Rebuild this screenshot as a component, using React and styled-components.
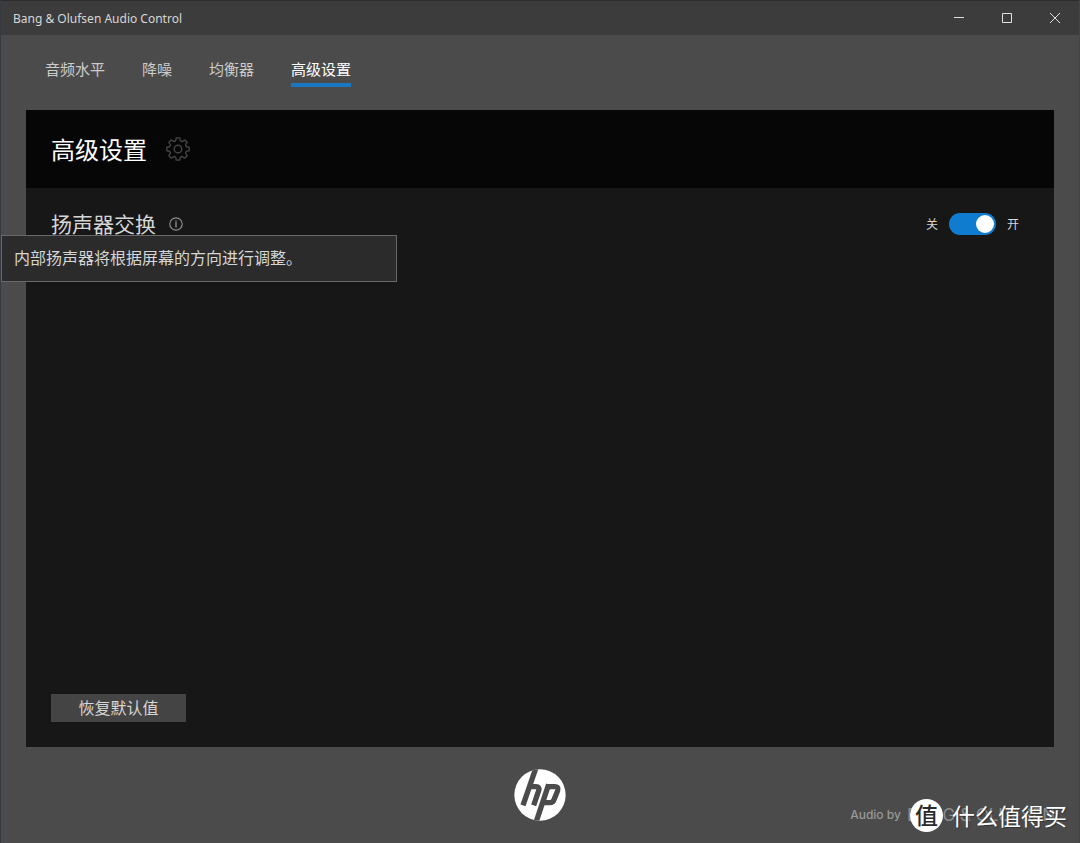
import React, { useState } from "react";
import styled, { createGlobalStyle } from "styled-components";

const GlobalStyle = createGlobalStyle`
    * {
        box-sizing: border-box;
    }

    body {
        margin: 0;
        background: #4b4b4b;
        font-family: "Noto Sans", "Noto Sans CJK SC", sans-serif;
        color: #d6d6d6;
    }

    button {
        font-family: inherit;
        color: inherit;
        border: none;
        padding: 0;
        cursor: pointer;
    }
`;

const TABS = ["音频水平", "降噪", "均衡器", "高级设置"];

// eight broad teeth joined by round valleys
const gearPath = () => {
    const point = (radius, degrees) => {
        const a = (degrees * Math.PI) / 180;
        return `${(12 + radius * Math.cos(a)).toFixed(2)} ${(12 + radius * Math.sin(a)).toFixed(2)}`;
    };
    let d = "";
    for (let k = 0; k < 8; k++) {
        const a = k * 45;
        d += `${k ? "L" : "M"}${point(9.8, a - 12)}L${point(11.3, a - 9)}L${point(11.3, a + 9)}L${point(9.8, a + 12)}`;
        d += `A1.9 1.9 0 0 0 ${point(9.8, a + 33)}`;
    }
    return d + "Z";
};

const GearIcon = () => (
    <svg width="24" height="24" viewBox="0 0 24 24" fill="none" stroke="#444444" strokeWidth="1.4" strokeLinejoin="round" aria-hidden="true">
        <path d={gearPath()} />
        <circle cx="12" cy="12" r="3.8" />
    </svg>
);

const InfoIcon = () => (
    <svg width="14" height="14" viewBox="0 0 14 14" fill="none" stroke="#8c8c8c" strokeWidth="1.2" aria-hidden="true">
        <circle cx="7" cy="7" r="6.2" />
        <path d="M7 3.4v1.3M7 5.2v5.2" strokeWidth="1.4" />
    </svg>
);

const HpLogo = () => (
    <svg width="52" height="52" viewBox="0 0 156 156" role="img" aria-label="hp">
        <defs>
            <clipPath id="disc">
                <circle cx="78" cy="78" r="77" />
            </clipPath>
        </defs>
        <circle cx="78" cy="78" r="77" fill="#ffffff" />
        <g clipPath="url(#disc)" fill="none" stroke="#4b4b4b" strokeWidth="16">
            <path d="M66 -4L27 109" />
            <path d="M44 53H66Q78 53 74 65L59 109" />
            <path d="M104 46L66 160" />
            <path d="M100 53H122Q135 53 131 65L120 92Q117 101 108 101H86" />
        </g>
    </svg>
);

const App = () => {
    const [active, setActive] = useState("高级设置");
    const [swapped, setSwapped] = useState(true);

    return (
        <Window>
            <GlobalStyle />
            <TitleBar>
                <Title>Bang &amp; Olufsen Audio Control</Title>
                <WindowButton aria-label="最小化">
                    <svg width="12" height="12" viewBox="0 0 12 12"><path d="M1 5.5h10" /></svg>
                </WindowButton>
                <WindowButton aria-label="最大化">
                    <svg width="12" height="12" viewBox="0 0 12 12"><path d="M1.5 1.5h9v9h-9z" /></svg>
                </WindowButton>
                <WindowButton aria-label="关闭">
                    <svg width="12" height="12" viewBox="0 0 12 12"><path d="M1 1l10 10M11 1L1 11" /></svg>
                </WindowButton>
            </TitleBar>
            <Nav>
                {TABS.map((tab) => (
                    <Tab key={tab} $active={tab === active} onClick={() => setActive(tab)}>
                        {tab}
                    </Tab>
                ))}
            </Nav>
            <Panel>
                <PanelHeader>
                    <h1>高级设置</h1>
                    <GearIcon />
                </PanelHeader>
                <SettingRow>
                    <SettingName>
                        <label htmlFor="speaker-swap">扬声器交换</label>
                        <InfoButton aria-label="说明" aria-describedby="swap-tip">
                            <InfoIcon />
                        </InfoButton>
                    </SettingName>
                    <SwitchGroup>
                        <span>关</span>
                        <Switch
                            id="speaker-swap"
                            type="checkbox"
                            role="switch"
                            checked={swapped}
                            onChange={(e) => setSwapped(e.target.checked)}
                        />
                        <span>开</span>
                    </SwitchGroup>
                    <Tooltip id="swap-tip" role="tooltip">内部扬声器将根据屏幕的方向进行调整。</Tooltip>
                </SettingRow>
                <PanelFooter>
                    <ResetButton>恢复默认值</ResetButton>
                </PanelFooter>
            </Panel>
            <Footer>
                <HpLogo />
                <Brand>
                    <small>Audio by</small>
                    <span>BANG &amp; OLUFSEN</span>
                </Brand>
                <Watermark>
                    <Seal>值</Seal>
                    <span>什么值得买</span>
                </Watermark>
            </Footer>
        </Window>
    );
};

export default App;

const Window = styled.div`
    min-height: 100vh;
    display: flex;
    flex-direction: column;
    border-left: 1px solid #343a40;
    border-right: 1px solid #444444;
`;

const TitleBar = styled.header`
    height: 35px;
    display: flex;
    align-items: center;
    background: #3c3c3c;
    border-top: 1px solid #2c2c2c;
`;

const Title = styled.span`
    flex: 1;
    padding-left: 12px;
    font-size: 12px;
`;

const WindowButton = styled.button`
    width: 48px;
    height: 34px;
    display: flex;
    align-items: center;
    justify-content: center;
    background: transparent;

    svg {
        fill: none;
        stroke: #e0e0e0;
    }

    &:hover {
        background: #555555;
    }
`;

const Nav = styled.nav`
    height: 75px;
    display: flex;
    align-items: flex-start;
    gap: 37px;
    padding: 22px 44px 0;
`;

const Tab = styled.button`
    height: 30px;
    display: flex;
    align-items: flex-start;
    background: transparent;
    font-size: 15px;
    line-height: 24px;
    color: ${({ $active }) => ($active ? "#ffffff" : "#cccccc")};
    border-bottom: 4px solid ${({ $active }) => ($active ? "#1a78c2" : "transparent")};
`;

const Panel = styled.main`
    flex: 1;
    display: flex;
    flex-direction: column;
    margin: 0 25px;
    background: #171717;
`;

const PanelHeader = styled.div`
    height: 78px;
    display: flex;
    align-items: center;
    gap: 19px;
    padding: 0 25px;
    background: #060606;

    h1 {
        margin: 0;
        padding-top: 2px;
        font-size: 24px;
        font-weight: 400;
        line-height: 36px;
        color: #ffffff;
    }
`;

const SettingRow = styled.div`
    position: relative;
    height: 72px;
    display: flex;
    align-items: center;
    justify-content: space-between;
    padding: 0 35px 0 25px;
`;

const SettingName = styled.div`
    display: flex;
    align-items: center;
    gap: 13px;
    font-size: 21px;
    line-height: 32px;
`;

const InfoButton = styled.button`
    display: flex;
    background: transparent;
`;

const SwitchGroup = styled.div`
    display: flex;
    align-items: center;
    gap: 11px;
    font-size: 12px;
`;

const Switch = styled.input`
    appearance: none;
    width: 47px;
    height: 22px;
    margin: 0;
    padding: 2px;
    display: flex;
    justify-content: flex-start;
    border-radius: 11px;
    background: #555555;
    cursor: pointer;

    &::before {
        content: "";
        width: 18px;
        height: 18px;
        border-radius: 50%;
        background: #ffffff;
    }

    &:checked {
        justify-content: flex-end;
        background: #0f7cd0;
    }
`;

const Tooltip = styled.div`
    position: absolute;
    top: 47px;
    left: -25px;
    width: 396px;
    padding: 11px 12px;
    font-size: 16px;
    line-height: 23px;
    background: #2b2b2b;
    border: 1px solid #686868;
`;

const PanelFooter = styled.div`
    margin-top: auto;
    padding: 25px;
`;

const ResetButton = styled.button`
    width: 135px;
    height: 28px;
    background: #444444;
    font-size: 16px;
    line-height: 24px;
`;

const Footer = styled.footer`
    position: relative;
    height: 96px;
    display: flex;
    align-items: center;
    justify-content: center;
`;

const Brand = styled.div`
    position: absolute;
    right: 24px;
    bottom: 16px;
    display: flex;
    align-items: center;
    gap: 6px;
    font-family: Inter, sans-serif;
    font-size: 17px;
    line-height: 24px;
    color: #8c8c8c;

    small {
        font-size: 12px;
        font-weight: 500;
        color: #999999;
    }
`;

const Watermark = styled.div`
    position: absolute;
    right: 12px;
    bottom: 11px;
    display: flex;
    align-items: center;
    gap: 9px;
    font-size: 23px;
    line-height: 32px;
    color: #ffffff;
    text-shadow: 1px 1px 1px #333333;
`;

const Seal = styled.span`
    width: 33px;
    height: 33px;
    border-radius: 50%;
    background: #ffffff;
    color: #2a2a2a;
    font-weight: 500;
    text-align: center;
    text-shadow: none;
`;
